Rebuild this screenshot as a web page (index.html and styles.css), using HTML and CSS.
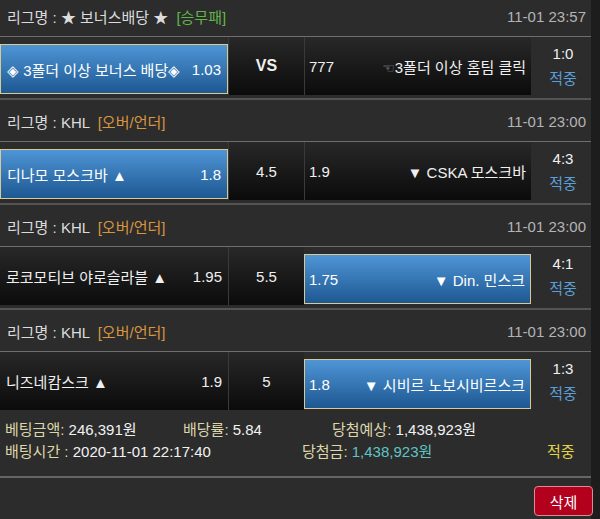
FILE: index.html
```html
<!DOCTYPE html>
<html>
<head>
	<meta charset="utf-8">
	<title>베팅내역</title>
	<link rel="stylesheet" href="styles.css">
</head>
<body>
  <div class="slip">

    <div class="game">
      <div class="league">
        <span>리그명 : ★ 보너스배당 ★ <span class="type win">[승무패]</span></span>
        <span class="time">11-01 23:57</span>
      </div>
      <div class="match">
        <div class="pick sel"><span>◈ 3폴더 이상 보너스 배당◈</span><span>1.03</span></div>
        <div class="mid vs">VS</div>
        <div class="pick away"><span>777</span><span><span class="hand">☜</span>3폴더 이상 홈팀 클릭</span></div>
        <div class="result"><div>1:0</div><div class="hit">적중</div></div>
      </div>
    </div>

    <div class="game">
      <div class="league">
        <span>리그명 : KHL <span class="type ou">[오버/언더]</span></span>
        <span class="time">11-01 23:00</span>
      </div>
      <div class="match">
        <div class="pick sel"><span>디나모 모스크바 ▲</span><span>1.8</span></div>
        <div class="mid">4.5</div>
        <div class="pick away"><span>1.9</span><span>▼ CSKA 모스크바</span></div>
        <div class="result"><div>4:3</div><div class="hit">적중</div></div>
      </div>
    </div>

    <div class="game">
      <div class="league">
        <span>리그명 : KHL <span class="type ou">[오버/언더]</span></span>
        <span class="time">11-01 23:00</span>
      </div>
      <div class="match">
        <div class="pick"><span>로코모티브 야로슬라블 ▲</span><span>1.95</span></div>
        <div class="mid">5.5</div>
        <div class="pick away sel"><span>1.75</span><span>▼ Din. 민스크</span></div>
        <div class="result"><div>4:1</div><div class="hit">적중</div></div>
      </div>
    </div>

    <div class="game last">
      <div class="league">
        <span>리그명 : KHL <span class="type ou">[오버/언더]</span></span>
        <span class="time">11-01 23:00</span>
      </div>
      <div class="match">
        <div class="pick"><span>니즈네캄스크 ▲</span><span>1.9</span></div>
        <div class="mid">5</div>
        <div class="pick away sel"><span>1.8</span><span>▼ 시비르 노보시비르스크</span></div>
        <div class="result"><div>1:3</div><div class="hit">적중</div></div>
      </div>
    </div>

    <div class="summary">
      <div class="line">
        <span class="c1"><span class="lbl">베팅금액:</span> 246,391원</span>
        <span class="c2"><span class="lbl">배당률:</span> 5.84</span>
        <span><span class="lbl">당첨예상:</span> 1,438,923원</span>
      </div>
      <div class="line">
        <span class="c3"><span class="lbl">배팅시간 :</span> 2020-11-01 22:17:40</span>
        <span class="c4"><span class="lbl">당첨금:</span> <span class="prize">1,438,923원</span></span>
        <span class="status">적중</span>
      </div>
    </div>

    <div class="actions">
      <button class="delete">삭제</button>
    </div>

  </div>
</body>
</html>
```

FILE: styles.css
```css
body {
	margin: 0;
	background-color: #1d1d1d;
	font-family: 'Liberation Sans', 'Noto Sans CJK KR', sans-serif;
	font-size: 15px;
	color: #e6e6e6;
}

.slip {
	width: 591px;
	margin-top: -4px;
	background-color: #2c2c2c;
}

.league {
	display: flex;
	justify-content: space-between;
	align-items: center;
	height: 42px;
	padding: 1px 5px 0 7px;
	box-sizing: border-box;
	border-bottom: 1px solid #6e6e6e;
	color: #dcdcdc;
}

.game:first-child .league {
	height: 41px;
}

.league .time {
	color: #b4b4b4;
}

.type {
	margin-left: 4px;
}

.type.win {
	color: #62b44a;
}

.type.ou {
	color: #d9963f;
}

.match {
	display: flex;
	height: 58px;
	padding-bottom: 3px;
	border-bottom: 2px solid #545454;
}

.game.last .match {
	border-bottom: none;
	padding-bottom: 0;
}

.pick, .mid {
	background: linear-gradient(to bottom, #282828, #0b0b0b);
}

.pick {
	display: flex;
	justify-content: space-between;
	align-items: center;
	width: 228px;
	box-sizing: border-box;
	padding: 0 6px;
	color: #f0f0f0;
	white-space: nowrap;
}

.pick.away {
	width: 227px;
	border-left: 1px solid #3a3a3a;
	padding: 0 5px 0 4px;
}

.pick.sel {
	margin-top: 7px;
	margin-bottom: 1px;
	border: 1px solid #d8cb92;
	background: linear-gradient(to bottom, #4f95d6, #1d5892);
	color: #fff;
}

.mid {
	display: flex;
	justify-content: center;
	align-items: center;
	width: 75px;
	border-left: 1px solid #3a3a3a;
	color: #f0f0f0;
}

.mid.vs {
	font-weight: bold;
	font-size: 16px;
}

.hand {
	font-family: 'DejaVu Sans', sans-serif;
	font-size: 14px;
	color: #9a9a9a;
}

.result {
	display: flex;
	flex-direction: column;
	justify-content: center;
	align-items: center;
	flex: 1;
	padding-left: 4px;
	line-height: 25px;
	color: #f0f0f0;
}

.result .hit {
	color: #5b9fd8;
}

.summary {
	padding: 9px 0 13px 5px;
	border-bottom: 2px solid #666;
}

.line {
	display: flex;
	line-height: 22px;
	font-size: 15px;
	color: #f2f2f2;
	white-space: nowrap;
}

.lbl {
	color: #ddd6aa;
}

.c1 {
	width: 178px;
}

.c2 {
	width: 149px;
}

.c3 {
	width: 297px;
}

.c4 {
	width: 245px;
}

.prize {
	color: #5fc4c4;
}

.status {
	color: #e2d448;
}

.actions {
	display: flex;
	justify-content: flex-end;
	padding: 8px 0 5px;
}

.delete {
	width: 59px;
	height: 30px;
	margin-right: -2px;
	background-color: #b3001c;
	border: 1px solid #d98c94;
	border-radius: 4px;
	color: #fff;
	font-family: 'Liberation Sans', 'Noto Sans CJK KR', sans-serif;
	font-size: 15px;
}
```
